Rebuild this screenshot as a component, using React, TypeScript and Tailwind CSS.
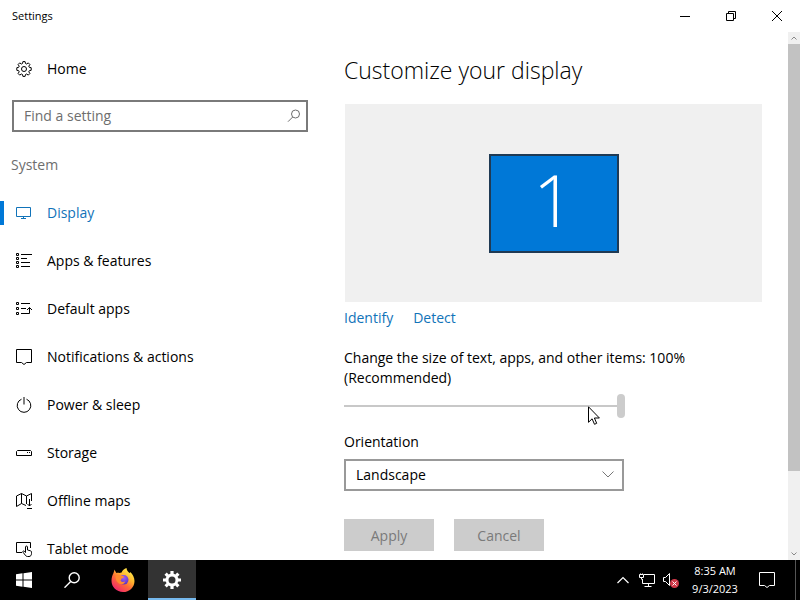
import { useState } from "react";
import type { ReactNode } from "react";

// small line icon, everything in the sidebar uses the same 16px grid
function LineIcon({ children }: { children: ReactNode }) {
  return (
    <svg viewBox="0 0 16 16" className="h-4 w-4 shrink-0" fill="none" stroke="currentColor" strokeWidth="1" aria-hidden="true">
      {children}
    </svg>
  );
}

const gearPath =
  "M6.900.600h2.200l.4 1.900 1.100.5 1.700-1.100 1.600 1.600-1.100 1.700.5 1.100 1.900.4v2.600l-1.900.4-.5 1.100 1.100 1.700-1.600 1.600-1.700-1.100-1.100.5-.4 1.900H6.900l-.4-1.900-1.100-.5-1.700 1.100-1.600-1.600 1.100-1.700-.5-1.100-1.900-.4V6.700l1.900-.4.5-1.100-1.100-1.700 1.600-1.600 1.700 1.100 1.100-.5z";

const menu = [
  {
    name: "Display",
    icon: <path d="M.5 2.500h14v9H.5zM7.500 11.500v2M5 13.500h5" />,
  },
  {
    name: "Apps & features",
    icon: (
      <>
        <path d="M.5.500h2v2h-2zM.5 4.500h2v2h-2zM.5 8.500h2v2h-2zM.5 12.500h2v2h-2z" />
        <path d="M5 1.500h11M5 5.500h6M5 9.500h9M5 13.500h9" />
      </>
    ),
  },
  {
    name: "Default apps",
    icon: (
      <>
        <path d="M.5 1.500h2v2h-2zM.5 6.500h2v2h-2zM.5 11.500h2v2h-2z" />
        <path d="M5 2.500h9M5 7.500h5M5 12.500h8.500v-6M11 9l2.500-2.500L16 9" />
      </>
    ),
  },
  {
    name: "Notifications & actions",
    icon: <path d="M.5.500h15v13H10.500L8 15.500l-2.500-2H.5z" />,
  },
  {
    name: "Power & sleep",
    icon: <path d="M5.500 2.200a6.800 6.800 0 1 0 5 0M8 0v7.500" />,
  },
  {
    name: "Storage",
    icon: <path d="M1.500 5.500h13l1 1v4h-15v-4zM11 7.500h1M13 7.500h1" />,
  },
  {
    name: "Offline maps",
    icon: (
      <>
        <path d="M10 12.500l-4.500-2-5 3V3l5-2.500 5 2.500 5-2.500V8M5.500.500v10M10.500 3v8" />
        <path d="M13.500 6v7M11.500 11l2 2 2-2M11 15.500h5" />
      </>
    ),
  },
  {
    name: "Tablet mode",
    icon: (
      <>
        <path d="M6 11.500H.5v-10h14V7" />
        <path d="M9.500 11.500V6c0-1.300 2-1.300 2 0v3l3 .8c.8.200 1 .700 1 1.400v1.300c0 1.800-1 3-2.500 3h-1.500c-1 0-1.700-.5-2.200-1.300L7 11.200c-.6-1 .5-1.700 1.300-1z" />
      </>
    ),
  },
];

function TitleBar() {
  return (
    <header className="flex h-8 shrink-0 items-center justify-between">
      <h1 className="pl-3 text-[11px]">Settings</h1>
      <div className="flex">
        <button aria-label="Minimize" className="flex h-8 w-[46px] items-center justify-center">
          <svg viewBox="0 0 10 10" className="h-[10px] w-[10px]" stroke="#000"><path d="M0 5.500h10" /></svg>
        </button>
        <button aria-label="Restore" className="flex h-8 w-[46px] items-center justify-center">
          <svg viewBox="0 0 10 10" className="h-[10px] w-[10px]" fill="none" stroke="#000">
            <path d="M.5 2.500h7v7h-7zM2.500 2.500v-2h7v7h-2" />
          </svg>
        </button>
        <button aria-label="Close" className="flex h-8 w-[46px] items-center justify-center">
          <svg viewBox="0 0 10 10" className="h-[10px] w-[10px]" stroke="#000"><path d="M0 0l10 10M10 0L0 10" /></svg>
        </button>
      </div>
    </header>
  );
}

function Sidebar() {
  const [active, setActive] = useState("Display");
  const [search, setSearch] = useState("");

  return (
    <aside className="w-80 shrink-0 overflow-hidden pt-3">
      <button className="flex h-[50px] w-full items-center gap-[15px] pl-4">
        <LineIcon>
          <path d={gearPath} />
          <circle cx="8" cy="8" r="2.500" />
        </LineIcon>
        Home
      </button>

      {/* search box */}
      <label className="mx-3 mt-[6px] flex h-8 items-center border-2 border-[#7a7a7a] pr-[5px]">
        <input
          type="text"
          aria-label="Find a setting"
          placeholder="Find a setting"
          value={search}
          onChange={(e) => setSearch(e.target.value)}
          className="min-w-0 flex-1 pl-[10px] outline-none placeholder:text-[#6e6e6e]"
        />
        <svg viewBox="0 0 14 14" className="h-[14px] w-[14px]" fill="none" stroke="#6e6e6e">
          <circle cx="8.500" cy="5" r="4" />
          <path d="M5.700 8L1 12.700" />
        </svg>
      </label>

      <h2 className="flex h-[57px] items-center pt-2 pl-[11px] text-[#6e6e6e]">System</h2>

      <nav>
        {menu.map((item) => (
          <button
            key={item.name}
            onClick={() => setActive(item.name)}
            className={`flex h-12 w-full items-center ${active === item.name ? "text-[#1173b9]" : ""}`}
          >
            <span className={`h-6 w-1 ${active === item.name ? "bg-[#0078d7]" : ""}`}></span>
            <span className="flex items-center gap-[15px] pl-3">
              <LineIcon>{item.icon}</LineIcon>
              {item.name}
            </span>
          </button>
        ))}
      </nav>
    </aside>
  );
}

function DisplayPage() {
  const [scale, setScale] = useState(100);
  const [orientation, setOrientation] = useState("Landscape");

  return (
    <main className="min-w-0 flex-1 overflow-hidden pt-5 pr-[26px] pl-6">
      <h2 className="text-[23px] leading-9 font-light">Customize your display</h2>

      {/* monitor preview */}
      <div className="mt-4 ml-px flex h-[198px] items-center justify-center bg-[#f0f0f0]">
        <div className="flex h-[99px] w-[130px] items-center justify-center border-2 border-[#1f3a54] bg-[#0078d7] pb-2 text-7xl font-light text-white">
          1
        </div>
      </div>

      <div className="mt-[6px] flex gap-5 leading-5 text-[#1173b9]">
        <a href="#identify">Identify</a>
        <a href="#detect">Detect</a>
      </div>

      <label htmlFor="scale" className="mt-5 block leading-5">
        Change the size of text, apps, and other items: 100%
        <br />
        (Recommended)
      </label>
      <div className="relative mt-[6px] w-[281px]">
        <input
          id="scale"
          type="range"
          min="0"
          max="100"
          value={scale}
          onChange={(e) => setScale(Number(e.target.value))}
          className="block h-6 w-full appearance-none bg-transparent [&::-webkit-slider-runnable-track]:h-[2px] [&::-webkit-slider-runnable-track]:bg-[#c8c8c8] [&::-webkit-slider-thumb]:-mt-[11px] [&::-webkit-slider-thumb]:h-6 [&::-webkit-slider-thumb]:w-2 [&::-webkit-slider-thumb]:appearance-none [&::-webkit-slider-thumb]:rounded [&::-webkit-slider-thumb]:bg-[#cccccc]"
        />
        {/* mouse pointer */}
        <svg viewBox="0 0 12 19" className="pointer-events-none absolute top-3 left-[244px] h-[19px] w-3" fill="#fff" stroke="#000">
          <path d="M.5.800v15.500l3.600-3.500 2.400 5.500 2.200-1-2.300-5.300h5z" />
        </svg>
      </div>

      <label htmlFor="orientation" className="mt-[14px] block leading-5">
        Orientation
      </label>
      <div className="relative mt-[7px] w-[280px]">
        <select
          id="orientation"
          value={orientation}
          onChange={(e) => setOrientation(e.target.value)}
          className="h-8 w-full appearance-none border-2 border-[#999999] bg-white pl-[10px]"
        >
          <option>Landscape</option>
          <option>Portrait</option>
        </select>
        <svg viewBox="0 0 12 7" className="pointer-events-none absolute top-3 right-[10px] h-[7px] w-3" fill="none" stroke="#777">
          <path d="M.5.500L6 6 11.500.500" />
        </svg>
      </div>

      <div className="mt-7 flex gap-5">
        <button disabled className="h-8 w-[90px] bg-[#cccccc] pt-px text-[#7a7a7a]">Apply</button>
        <button disabled className="h-8 w-[90px] bg-[#cccccc] pt-px text-[#7a7a7a]">Cancel</button>
      </div>
    </main>
  );
}

function Scrollbar() {
  return (
    <div className="flex w-3 shrink-0 flex-col items-center bg-[#f0f0f0]" aria-hidden="true">
      <svg viewBox="0 0 12 12" className="h-3 w-3 shrink-0" fill="none" stroke="#888"><path d="M3.500 7.500L6 5l2.500 2.500" /></svg>
      <div className="w-full flex-[427] bg-[#c2c2c2]"></div>
      <div className="flex-[77]"></div>
      <svg viewBox="0 0 12 12" className="h-3 w-3 shrink-0" fill="none" stroke="#888"><path d="M3.500 4.500L6 7l2.500-2.500" /></svg>
    </div>
  );
}

function Firefox() {
  return (
    <svg viewBox="0 0 24 24" className="h-6 w-6" aria-hidden="true">
      <defs>
        <linearGradient id="flame" x1="0.850" y1="0.050" x2="0.200" y2="0.950">
          <stop offset="0" stopColor="#fff14f" />
          <stop offset="0.350" stopColor="#ffb52e" />
          <stop offset="0.600" stopColor="#ff6b36" />
          <stop offset="1" stopColor="#f0246e" />
        </linearGradient>
        <radialGradient id="globe" cx="0.500" cy="0.300" r="0.700">
          <stop offset="0" stopColor="#a05cf5" />
          <stop offset="1" stopColor="#5a36c0" />
        </radialGradient>
      </defs>
      <path
        fill="url(#flame)"
        d="M15.500 0c.3 2.600 1.500 3.500 3 5 .4-.2.600-.6.600-1.100 2.600 2.200 4.400 5.600 4.400 9C23.500 19.200 18.400 24 12 24S.5 19.200.5 12.800c0-3.200.9-5.600 1.900-7.600L3.600 1.500c.5 1.500 1 2.300 1.900 3.500 1-.3 2-.3 3 0 .6-.3 1.200-.5 2.100-.6C11.300 2.500 13.200.900 15.500 0z"
      />
      <circle cx="12.700" cy="11.800" r="4.800" fill="url(#globe)" />
      <path
        fill="#ff8a2e"
        d="M4.500 8c2-1.800 4.700-1.300 6 0 1.200 0 2 .1 2.500.7-.4 1.200-1.700 1.500-2.300 1.900-.6.500-.5 1.600-1.200 2.100 1.300 1.700 3 1.500 4.800.8-.8 1.900-2.500 3-4.700 2.500C6.500 15.300 4.500 12.500 4.500 8z"
      />
    </svg>
  );
}

function Taskbar() {
  return (
    <footer className="flex h-10 shrink-0 items-stretch justify-between bg-black text-white">
      <div className="flex">
        <button aria-label="Start" className="flex w-12 items-center justify-center">
          <svg viewBox="0 0 16 16" className="h-4 w-4" fill="#fff">
            <path d="M0 2.200l6.500-.9v6.200H0zM7.500 1.200L16 0v7.500H7.500zM0 8.500h6.500v6.200L0 13.800zM7.500 8.500H16V16l-8.500-1.200z" />
          </svg>
        </button>
        <button aria-label="Search" className="flex w-12 items-center justify-center">
          <svg viewBox="0 0 16 16" className="h-4 w-4" fill="none" stroke="#fff" strokeWidth="1.400">
            <circle cx="10.200" cy="5.800" r="5" />
            <path d="M6.700 9.500L.5 15.700" />
          </svg>
        </button>
        <button aria-label="Firefox" className="ml-[3px] flex w-12 items-center justify-center">
          <Firefox />
        </button>
        <button aria-label="Settings" className="ml-px flex w-12 items-center justify-center border-b-2 border-[#76b9ed] bg-[#333333] pt-[2px]">
          <svg viewBox="0 0 18 18" className="h-[18px] w-[18px]" fill="none" stroke="#fff">
            <circle cx="9" cy="9" r="5" strokeWidth="3" />
            <path d="M9 0v3M9 15v3M0 9h3M15 9h3M2.600 2.600l2.200 2.200M13.200 13.200l2.200 2.200M15.400 2.600l-2.200 2.200M4.800 13.200l-2.200 2.200" strokeWidth="3.200" />
          </svg>
        </button>
      </div>

      {/* tray */}
      <div className="flex items-center">
        <button aria-label="Show hidden icons" className="flex w-6 justify-center">
          <svg viewBox="0 0 12 8" className="h-2 w-3" fill="none" stroke="#fff" strokeWidth="1.200"><path d="M.5 7L6 1.500 11.500 7" /></svg>
        </button>
        <button aria-label="Network" className="flex w-6 justify-center">
          <svg viewBox="0 0 16 14" className="h-[14px] w-4" fill="none" stroke="#fff">
            <path d="M5 1.500h10.500v9H3.500V6M9.500 10.500v3M5.500 13.500h7" />
            <path d="M.5 1.500h4v3h-4zM2.500 4.500v2M1.500.500v1M3.500.500v1" />
          </svg>
        </button>
        <button aria-label="Volume muted" className="flex w-6 justify-center">
          <svg viewBox="0 0 16 16" className="h-4 w-4" fill="none" stroke="#fff">
            <path d="M.5 5.500h2l4-4v12l-4-4h-2z" />
            <circle cx="11.500" cy="11.500" r="4.500" fill="#d13848" stroke="none" />
            <path d="M9.500 9.500l4 4M13.500 9.500l-4 4" />
          </svg>
        </button>
        <button className="w-16 text-center text-[11px] leading-[18px] whitespace-nowrap">
          8:35 AM
          <br />
          9/3/2023
        </button>
        <button aria-label="Action center" className="flex w-10 justify-center">
          <svg viewBox="0 0 16 16" className="h-4 w-4" fill="none" stroke="#fff"><path d="M.5.500h15v13H10.500L8 15.500l-2.500-2H.5z" /></svg>
        </button>
        <div className="mr-1 ml-2 h-full w-px bg-[#555]"></div>
      </div>
    </footer>
  );
}

export default function App() {
  return (
    <div className="flex h-screen flex-col bg-white font-['Open_Sans','Noto_Sans',sans-serif] text-sm text-black">
      <TitleBar />
      <div className="flex min-h-0 flex-1">
        <Sidebar />
        <DisplayPage />
        <Scrollbar />
      </div>
      <Taskbar />
    </div>
  );
}
